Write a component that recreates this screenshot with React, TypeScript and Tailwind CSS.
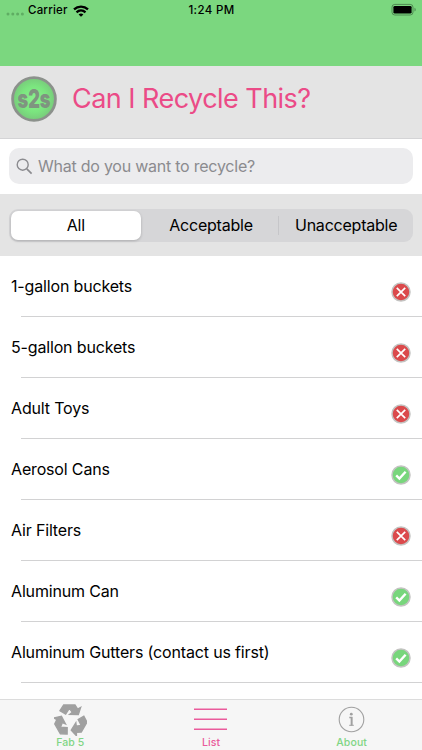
import React from 'react';

interface Item {
  name: string;
  acceptable: boolean;
}

const items: Item[] = [
  { name: '1-gallon buckets', acceptable: false },
  { name: '5-gallon buckets', acceptable: false },
  { name: 'Adult Toys', acceptable: false },
  { name: 'Aerosol Cans', acceptable: true },
  { name: 'Air Filters', acceptable: false },
  { name: 'Aluminum Can', acceptable: true },
  { name: 'Aluminum Gutters (contact us first)', acceptable: true },
];

const StatusBar: React.FC = () => (
  <div className="grid h-[66px] grid-cols-3 items-start bg-[#7bd77f] pt-[3px] pr-[5px] pl-1.5 text-[11.5px] leading-[15px] font-medium text-black">
    <div className="flex items-center">
      <svg width="18" height="15" viewBox="0 0 18 15" fill="#5fad63">
        <circle cx="2" cy="11" r="1.5" />
        <circle cx="6.8" cy="11" r="1.5" />
        <circle cx="11.6" cy="11" r="1.5" />
        <circle cx="16.4" cy="11" r="1.5" />
      </svg>
      <span className="ml-1 tracking-[0.2px]">Carrier</span>
      <svg className="ml-[5px]" width="16" height="12" viewBox="0 0 16 12" fill="none" stroke="#000" strokeWidth="2.3">
        <path d="M1 4.4C5 .6 11 .6 15 4.4" />
        <path d="M3.5 7.3c2.6-2.4 6.4-2.4 9 0" />
        <path d="M8 11.8 5.6 9.4c1.4-1.2 3.4-1.2 4.8 0z" fill="#000" stroke="none" />
      </svg>
    </div>
    <span className="text-center tracking-[0.35px]">1:24 PM</span>
    <svg className="justify-self-end" width="26" height="13" viewBox="0 0 26 13">
      <rect x="1" y="1.4" width="21" height="10.6" rx="2.8" fill="none" stroke="#4f8a52" />
      <rect x="2.4" y="2.9" width="18.2" height="7.7" rx="1.4" />
      <path d="M23.5 4.8c1.7.6 1.7 3.2 0 3.8z" fill="#4f8a52" />
    </svg>
  </div>
);

const Logo: React.FC = () => (
  <svg className="overflow-visible" width="46" height="46" viewBox="0 0 46 46">
    <defs>
      <radialGradient id="glow">
        <stop offset="0" stopColor="#8af08d" />
        <stop offset="0.6" stopColor="#7be57f" />
        <stop offset="1" stopColor="#78c97b" />
      </radialGradient>
    </defs>
    <circle cx="23" cy="23" r="21.4" fill="url(#glow)" stroke="#8c918c" strokeWidth="2.8" />
    <text
      x="23"
      y="32"
      textAnchor="middle"
      textLength="33"
      lengthAdjust="spacingAndGlyphs"
      fontFamily="Inter, sans-serif"
      fontWeight="900"
      fontSize="26"
      fill="#7f9480"
    >
      s2s
    </text>
  </svg>
);

const StatusIcon: React.FC<{ acceptable: boolean }> = ({ acceptable }) => (
  <svg width="20" height="20" viewBox="0 0 20 20" fill="none">
    <circle cx="10" cy="10" r="9" fill={acceptable ? '#78d67c' : '#db4a4c'} stroke="#c3c3c1" strokeWidth="1.5" />
    {acceptable ? (
      <path d="m5.2 10.4 3.2 3.2 6.2-6.8" stroke="#fff" strokeWidth="2.4" />
    ) : (
      <path d="m5.8 5.8 8.4 8.4m0-8.4-8.4 8.4" stroke="#fff" strokeWidth="1.7" />
    )}
  </svg>
);

// one folded arrow, repeated every 120 degrees
const arrow = 'M-31-29-20-46H14L22-34 31-39 24-17-2-18 6-24-3-36-14-19Z';

const RecycleIcon: React.FC = () => (
  <svg className="mt-px" width="33" height="32" viewBox="-49 -49 99 96" fill="#a0a0a0" stroke="#a0a0a0" strokeWidth="4">
    <path d={arrow} />
    <path d={arrow} transform="rotate(120)" />
    <path d={arrow} transform="rotate(240)" />
  </svg>
);

const App: React.FC = () => {
  return (
    <div className="flex h-[750px] w-[422px] flex-col overflow-hidden bg-white font-['Inter',sans-serif] text-black">
      <StatusBar />

      {/* Header */}
      <header className="flex h-[72px] shrink-0 items-center bg-[#e4e4e4] pb-[6px] pl-[11px]">
        <Logo />
        <h1 className="ml-[15px] text-[27px] leading-8 tracking-[-0.54px] text-[#eb4b87]">Can I Recycle This?</h1>
      </header>

      {/* Search */}
      <div className="h-14 shrink-0 border-t border-[#d4d4d6] bg-white px-[9px] pt-[9px]">
        <div className="flex h-9 items-center rounded-[10px] bg-[#ececee] pl-[7px] text-[#8b8b8f]">
          <svg width="17" height="17" viewBox="0 0 17 17" fill="none" stroke="currentColor" strokeWidth="1.4">
            <circle cx="6.7" cy="6.7" r="5.5" />
            <path d="m10.8 10.8 4.8 4.8" strokeWidth="1.7" />
          </svg>
          <span className="ml-[5px] text-base tracking-[-0.24px]">What do you want to recycle?</span>
        </div>
      </div>

      {/* Filter */}
      <div className="h-[62px] shrink-0 bg-[#e4e4e4] px-[9px] pt-[15px]">
        <div className="grid h-[33px] grid-cols-3 items-center rounded-[9px] bg-[#d6d6d8] text-center text-base tracking-[-0.22px]">
          <div className="mr-[3px] ml-[2px] flex h-[29px] items-center justify-center rounded-[7px] bg-white pb-px shadow-[0_1px_3px_rgba(0,0,0,0.2)]">
            All
          </div>
          <div className="pb-px">Acceptable</div>
          <div className="border-l border-[#c6c6c9] leading-[19px]">Unacceptable</div>
        </div>
      </div>

      {/* Items */}
      <main className="min-h-0 flex-1 overflow-hidden">
        {items.map((item) => (
          <div key={item.name} className="relative h-[61px] pr-[11px] pl-[11px]">
            <div className="flex h-full items-center justify-between">
              <span className="pb-[2px] text-base tracking-[-0.16px]">{item.name}</span>
              <span className="pt-[10px]">
                <StatusIcon acceptable={item.acceptable} />
              </span>
            </div>
            <div className="absolute right-0 bottom-0 left-[21px] h-px bg-[#d2d2d3]" />
          </div>
        ))}
      </main>

      {/* Tabs */}
      <nav className="grid h-[51px] shrink-0 grid-cols-3 border-t border-[#dcdcdc] bg-[#f6f6f6] text-[10.5px] leading-[13px] font-medium text-[#80d584]">
        <div className="flex flex-col items-center pt-[3px]">
          <RecycleIcon />
          <span className="tracking-[0.1px]">Fab 5</span>
        </div>
        <div className="flex flex-col items-center pt-[3px] text-[#ea5b9b]">
          <svg width="33" height="33" viewBox="0 0 33 33" stroke="currentColor" strokeWidth="1.6">
            <path d="M0 6.3h33M0 16.2h33M0 26.2h33" />
          </svg>
          <span className="tracking-[0.1px]">List</span>
        </div>
        <div className="flex flex-col items-center pt-[3px]">
          <svg width="33" height="33" viewBox="0 0 33 33" fill="none" stroke="#a0a0a0">
            <circle cx="16.5" cy="16.5" r="12.3" strokeWidth="1.1" />
            <circle cx="16.3" cy="11.2" r="1.4" fill="#a0a0a0" stroke="none" />
            <path d="M14.3 14.5h2.5v7.6" strokeWidth="1.3" />
            <path d="M16.5 14v8.6" strokeWidth="1.7" />
            <path d="M14.2 22.3h4.6" />
          </svg>
          <span className="tracking-[0.1px]">About</span>
        </div>
      </nav>
    </div>
  );
};

export default App;
